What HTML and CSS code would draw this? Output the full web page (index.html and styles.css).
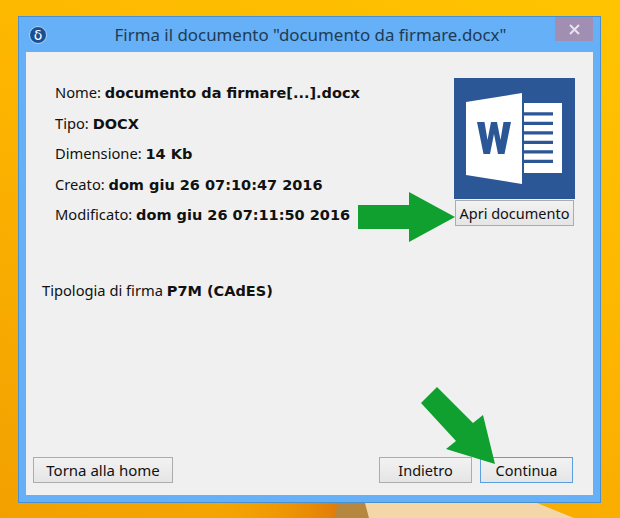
FILE: index.html
```html
<!DOCTYPE html>
<html lang="en">
<head>
    <meta charset="UTF-8">
    <meta name="viewport" content="width=device-width, initial-scale=1.0">
    <link rel="stylesheet" href="styles.css">
</head>
<body>

    <!-- bit of the desktop wallpaper visible under the window -->
    <svg class="wallpaper" width="620" height="15" viewBox="0 0 620 15">
        <defs>
            <linearGradient id="wall-shade" x1="0" y1="0" x2="1" y2="0">
                <stop offset="0" stop-color="#f3a000" stop-opacity="0"/>
                <stop offset="1" stop-color="#e07a0a"/>
            </linearGradient>
        </defs>
        <path d="M230 0H340V15H205Z" fill="url(#wall-shade)"/>
        <path d="M338 0H366L369 15H334Z" fill="#b5873f"/>
        <path d="M365 0H537L574 15H369Z" fill="#f4d7a8"/>
    </svg>

    <div class="window">
        <div class="titlebar">
            <div class="app-icon">&#948;</div>
            <div class="title">Firma il documento "documento da firmare.docx"</div>
            <div class="close">
                <svg width="11" height="11" viewBox="0 0 11 11">
                    <path d="M1 1L10 10M10 1L1 10" stroke="#e9e2f0" stroke-width="2" fill="none"/>
                </svg>
            </div>
        </div>
        <div class="content">
            <div class="top">
                <div class="info">
                    <p>Nome: <b>documento da firmare[...].docx</b></p>
                    <p>Tipo: <b>DOCX</b></p>
                    <p>Dimensione: <b>14 Kb</b></p>
                    <p>Creato: <b>dom giu 26 07:10:47 2016</b></p>
                    <p>Modificato: <b>dom giu 26 07:11:50 2016</b></p>
                </div>
                <div class="preview">
                    <svg class="word-icon" width="121" height="121" viewBox="0 0 121 121">
                        <rect width="121" height="121" fill="#2b5797"/>
                        <rect x="70" y="25" width="38" height="70" fill="#fff"/>
                        <path d="M70 34.300h29v3.300H70zM70 43.700h29v3.300H70zM70 53.300h29v3.300H70zM70 62.700h29v3.300H70zM70 72.300h29v3.300H70zM70 81.700h29v3.300H70z" fill="#2b5797"/>
                        <path d="M12 24L68 15V106L12 97Z" fill="#fff"/>
                        <path d="M23 44H30.500L33.500 62L37 44H43L46.500 62L49.500 44H57L50.500 76H44L40 56L36 76H29.500Z" fill="#2b5797"/>
                    </svg>
                    <button class="btn open-btn">Apri documento</button>
                </div>
            </div>
            <p class="sign-type">Tipologia di firma <b>P7M (CAdES)</b></p>
            <div class="actions">
                <button class="btn home-btn">Torna alla home</button>
                <div class="nav-btns">
                    <button class="btn nav-btn">Indietro</button>
                    <button class="btn nav-btn focused">Continua</button>
                </div>
            </div>
        </div>
    </div>

    <!-- green arrows drawn over the window -->
    <svg class="arrow arrow-right" width="100" height="52" viewBox="0 0 100 52">
        <path d="M0 14H51V1L97 26L51 51V38H0Z" fill="#0fa030"/>
    </svg>
    <svg class="arrow arrow-down" width="90" height="90" viewBox="0 0 90 90">
        <path d="M17 1L53 37L63 29L75 78L26 63L36 55L1 17Z" fill="#0fa030"/>
    </svg>

</body>
</html>
```

FILE: styles.css
```css
body {
    margin: 0;
    width: 620px;
    height: 518px;
    overflow: hidden;
    position: relative;
    padding: 16px 0 0 18px;
    box-sizing: border-box;
    font-family: "Noto Sans", sans-serif;
    background: linear-gradient(205deg, #ffc400 0%, #fdb500 45%, #f2a000 100%);
}
.wallpaper {
    position: absolute;
    left: 0;
    bottom: 0;
}
.window {
    position: relative;
    width: 583px;
    height: 487px;
    box-sizing: border-box;
    background-color: #66b0f8;
    border: 1px solid #4a8fd0;
    padding: 0 7px 7px 7px;
    display: flex;
    flex-direction: column;
}
.titlebar {
    height: 35px;
    flex-shrink: 0;
    display: flex;
    align-items: center;
    position: relative;
}
.app-icon {
    width: 16px;
    height: 16px;
    margin-left: 3px;
    margin-right: 2px;
    border: 1px solid #a8d4f8;
    border-radius: 50%;
    background-color: #1a4f95;
    color: #fff;
    font-family: "DejaVu Sans", sans-serif;
    font-size: 14px;
    line-height: 16px;
    text-align: center;
}
.title {
    flex: 1;
    margin-right: 21px;
    text-align: center;
    font-size: 16.900px;
    color: #1f3b52;
}
.close {
    position: absolute;
    top: 0;
    right: 0;
    width: 38px;
    height: 24px;
    background-color: #a08fb3;
    display: flex;
    align-items: center;
    justify-content: center;
}
.content {
    flex: 1;
    background-color: #f0f0f0;
    display: flex;
    flex-direction: column;
    padding: 26px 18px 12px 7px;
    color: #111;
    font-size: 14.700px;
}
.top {
    display: flex;
    justify-content: space-between;
    align-items: flex-start;
}
.info {
    padding-left: 22px;
}
.info p {
    margin: 0;
    height: 30.500px;
    line-height: 28px;
}
b {
    font-family: "DejaVu Sans", sans-serif;
    font-size: 14.500px;
}
.preview {
    display: flex;
    flex-direction: column;
    align-items: center;
    width: 121px;
}
.word-icon {
    display: block;
}
.btn {
    height: 26px;
    padding: 0;
    font-family: "Noto Sans", sans-serif;
    font-size: 14.500px;
    color: #111;
    background: linear-gradient(#f2f2f2, #e5e5e5);
    border: 1px solid #acacac;
}
.open-btn {
    width: 119px;
    margin-top: 1px;
}
.sign-type {
    margin: 47px 0 0 9px;
    line-height: 24px;
}
.actions {
    margin-top: auto;
    margin-right: 2px;
    display: flex;
    justify-content: space-between;
}
.home-btn {
    width: 140px;
    font-size: 15px;
}
.nav-btns {
    display: flex;
    gap: 8px;
}
.nav-btn {
    width: 93px;
}
.focused {
    border-color: #5a9fe0;
}
.arrow {
    position: absolute;
}
.arrow-right {
    left: 358px;
    top: 191px;
}
.arrow-down {
    left: 420px;
    top: 386px;
}
```
